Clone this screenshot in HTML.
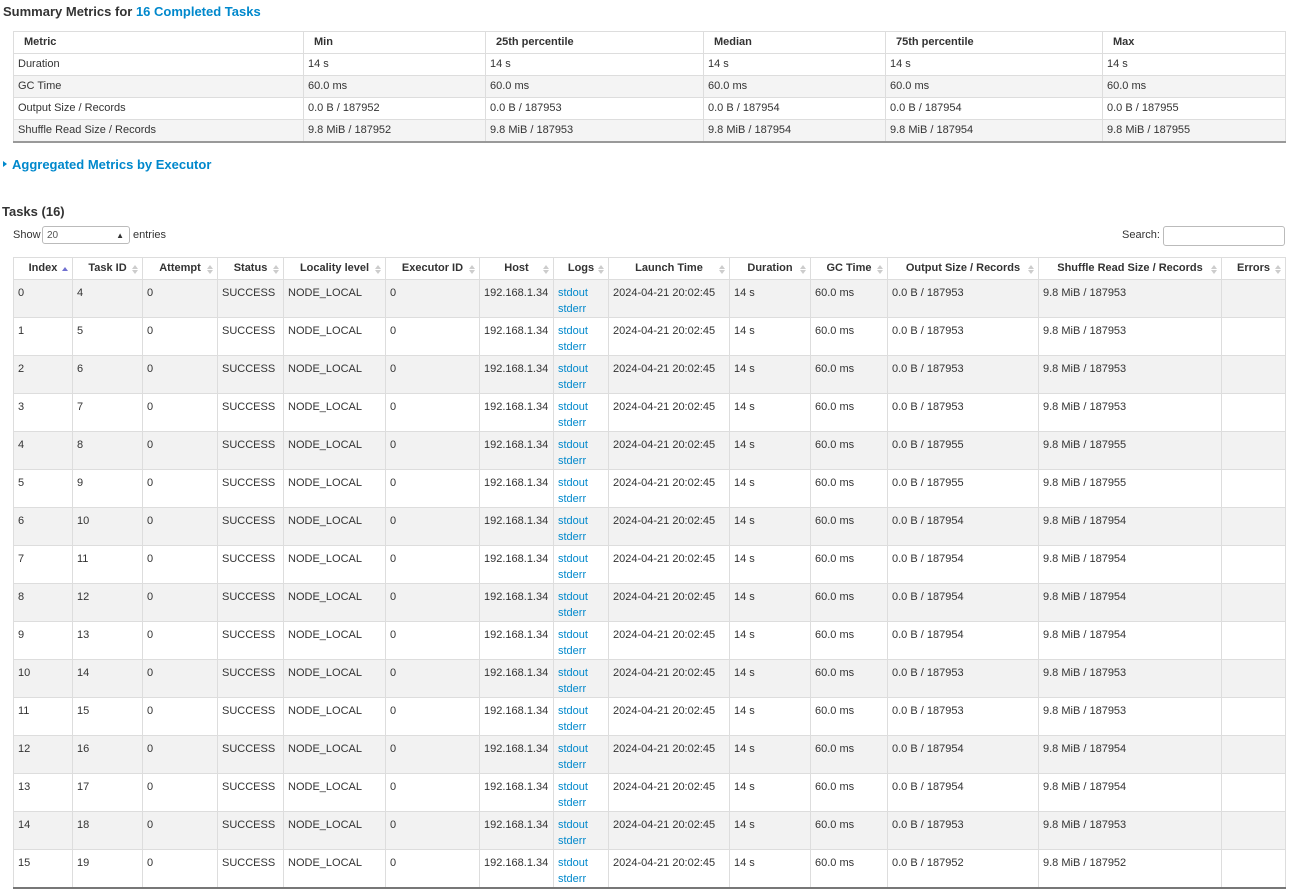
<!DOCTYPE html>
<html><head><meta charset="utf-8"><style>
body{margin:0;background:#fff;font-family:"Liberation Sans",sans-serif;font-size:11px;color:#333;width:1290px;height:894px;overflow:hidden;position:relative}
.a{position:absolute}
h4{margin:0;font-size:13px;font-weight:bold;color:#333}
.blue{color:#0088cc}
table{border-collapse:collapse;table-layout:fixed;position:absolute}
td,th{border:1px solid #ddd;padding:0 4px;text-align:left;vertical-align:top;white-space:nowrap;overflow:hidden}
th{font-weight:bold;color:#333}
#s{left:13px;top:31px;width:1272px}
#s th{height:21px;line-height:21px;padding-left:10px}
#s td{height:21px;line-height:21px}
#s tr:nth-child(odd) td{background:#f4f4f4}
#s tr:last-child td{border-bottom:2px solid #999}
#t{left:13px;top:257px;width:1272px}
#t th{height:21px;line-height:21px;text-align:center;position:relative}
#t th:after{content:"";position:absolute;right:4px;top:7px;border-left:3px solid transparent;border-right:3px solid transparent;border-bottom:4px solid #ccc}
#t th:before{content:"";position:absolute;right:4px;top:12px;border-left:3px solid transparent;border-right:3px solid transparent;border-top:4px solid #ccc}
#t th.sa:before{display:none}
#t th.sa:after{border-bottom-color:#7070d0;top:9px}
#t td{height:37px;padding-top:5px;box-sizing:border-box;line-height:16px}
#t tbody tr:nth-child(odd) td{background:#f2f2f2}
#t tbody tr:last-child td{border-bottom:2px solid #777}
a{color:#0088cc;text-decoration:none}
</style></head><body>
<h4 class="a" style="left:3px;top:4px">Summary Metrics for <span class="blue">16 Completed Tasks</span></h4>
<table id="s"><colgroup><col style="width:290px"><col style="width:182px"><col style="width:218px"><col style="width:182px"><col style="width:217px"><col style="width:183px"></colgroup>
<tr><th>Metric</th><th>Min</th><th>25th percentile</th><th>Median</th><th>75th percentile</th><th>Max</th></tr>
<tr><td>Duration</td><td>14 s</td><td>14 s</td><td>14 s</td><td>14 s</td><td>14 s</td></tr>
<tr><td>GC Time</td><td>60.0 ms</td><td>60.0 ms</td><td>60.0 ms</td><td>60.0 ms</td><td>60.0 ms</td></tr>
<tr><td>Output Size / Records</td><td>0.0 B / 187952</td><td>0.0 B / 187953</td><td>0.0 B / 187954</td><td>0.0 B / 187954</td><td>0.0 B / 187955</td></tr>
<tr><td>Shuffle Read Size / Records</td><td>9.8 MiB / 187952</td><td>9.8 MiB / 187953</td><td>9.8 MiB / 187954</td><td>9.8 MiB / 187954</td><td>9.8 MiB / 187955</td></tr>
</table>
<div class="a" style="left:3px;top:159px;width:0;height:0;border-top:3px solid transparent;border-bottom:3px solid transparent;border-left:4px solid #0088cc;margin-top:2px"></div>
<h4 class="a blue" style="left:12px;top:157px;color:#0088cc">Aggregated Metrics by Executor</h4>
<h4 class="a" style="left:2px;top:204px">Tasks (16)</h4>
<div class="a" style="left:13px;top:229px">Show</div>
<div class="a" style="left:42px;top:226px;width:86px;height:18px;border:1px solid #bbb;border-radius:3px;font-size:10px;line-height:18px;padding-left:4px;box-sizing:border-box;width:88px;color:#555">20<span style="position:absolute;right:5px;top:0;font-size:8px;color:#333">&#9650;</span></div>
<div class="a" style="left:133px;top:229px">entries</div>
<div class="a" style="left:1122px;top:229px">Search:</div>
<div class="a" style="left:1163px;top:226px;width:122px;height:20px;border:1px solid #bbb;border-radius:3px;box-sizing:border-box"></div>
<table id="t"><colgroup><col style="width:59px"><col style="width:70px"><col style="width:75px"><col style="width:66px"><col style="width:102px"><col style="width:94px"><col style="width:74px"><col style="width:55px"><col style="width:121px"><col style="width:81px"><col style="width:77px"><col style="width:151px"><col style="width:183px"><col style="width:64px"></colgroup>
<thead><tr><th class="sa">Index</th><th>Task ID</th><th>Attempt</th><th>Status</th><th>Locality level</th><th>Executor ID</th><th>Host</th><th>Logs</th><th>Launch Time</th><th>Duration</th><th>GC Time</th><th>Output Size / Records</th><th>Shuffle Read Size / Records</th><th>Errors</th></tr></thead>
<tbody>
<tr><td>0</td><td>4</td><td>0</td><td>SUCCESS</td><td>NODE_LOCAL</td><td>0</td><td>192.168.1.34</td><td><a>stdout</a><br><a>stderr</a></td><td>2024-04-21 20:02:45</td><td>14 s</td><td>60.0 ms</td><td>0.0 B / 187953</td><td>9.8 MiB / 187953</td><td></td></tr>
<tr><td>1</td><td>5</td><td>0</td><td>SUCCESS</td><td>NODE_LOCAL</td><td>0</td><td>192.168.1.34</td><td><a>stdout</a><br><a>stderr</a></td><td>2024-04-21 20:02:45</td><td>14 s</td><td>60.0 ms</td><td>0.0 B / 187953</td><td>9.8 MiB / 187953</td><td></td></tr>
<tr><td>2</td><td>6</td><td>0</td><td>SUCCESS</td><td>NODE_LOCAL</td><td>0</td><td>192.168.1.34</td><td><a>stdout</a><br><a>stderr</a></td><td>2024-04-21 20:02:45</td><td>14 s</td><td>60.0 ms</td><td>0.0 B / 187953</td><td>9.8 MiB / 187953</td><td></td></tr>
<tr><td>3</td><td>7</td><td>0</td><td>SUCCESS</td><td>NODE_LOCAL</td><td>0</td><td>192.168.1.34</td><td><a>stdout</a><br><a>stderr</a></td><td>2024-04-21 20:02:45</td><td>14 s</td><td>60.0 ms</td><td>0.0 B / 187953</td><td>9.8 MiB / 187953</td><td></td></tr>
<tr><td>4</td><td>8</td><td>0</td><td>SUCCESS</td><td>NODE_LOCAL</td><td>0</td><td>192.168.1.34</td><td><a>stdout</a><br><a>stderr</a></td><td>2024-04-21 20:02:45</td><td>14 s</td><td>60.0 ms</td><td>0.0 B / 187955</td><td>9.8 MiB / 187955</td><td></td></tr>
<tr><td>5</td><td>9</td><td>0</td><td>SUCCESS</td><td>NODE_LOCAL</td><td>0</td><td>192.168.1.34</td><td><a>stdout</a><br><a>stderr</a></td><td>2024-04-21 20:02:45</td><td>14 s</td><td>60.0 ms</td><td>0.0 B / 187955</td><td>9.8 MiB / 187955</td><td></td></tr>
<tr><td>6</td><td>10</td><td>0</td><td>SUCCESS</td><td>NODE_LOCAL</td><td>0</td><td>192.168.1.34</td><td><a>stdout</a><br><a>stderr</a></td><td>2024-04-21 20:02:45</td><td>14 s</td><td>60.0 ms</td><td>0.0 B / 187954</td><td>9.8 MiB / 187954</td><td></td></tr>
<tr><td>7</td><td>11</td><td>0</td><td>SUCCESS</td><td>NODE_LOCAL</td><td>0</td><td>192.168.1.34</td><td><a>stdout</a><br><a>stderr</a></td><td>2024-04-21 20:02:45</td><td>14 s</td><td>60.0 ms</td><td>0.0 B / 187954</td><td>9.8 MiB / 187954</td><td></td></tr>
<tr><td>8</td><td>12</td><td>0</td><td>SUCCESS</td><td>NODE_LOCAL</td><td>0</td><td>192.168.1.34</td><td><a>stdout</a><br><a>stderr</a></td><td>2024-04-21 20:02:45</td><td>14 s</td><td>60.0 ms</td><td>0.0 B / 187954</td><td>9.8 MiB / 187954</td><td></td></tr>
<tr><td>9</td><td>13</td><td>0</td><td>SUCCESS</td><td>NODE_LOCAL</td><td>0</td><td>192.168.1.34</td><td><a>stdout</a><br><a>stderr</a></td><td>2024-04-21 20:02:45</td><td>14 s</td><td>60.0 ms</td><td>0.0 B / 187954</td><td>9.8 MiB / 187954</td><td></td></tr>
<tr><td>10</td><td>14</td><td>0</td><td>SUCCESS</td><td>NODE_LOCAL</td><td>0</td><td>192.168.1.34</td><td><a>stdout</a><br><a>stderr</a></td><td>2024-04-21 20:02:45</td><td>14 s</td><td>60.0 ms</td><td>0.0 B / 187953</td><td>9.8 MiB / 187953</td><td></td></tr>
<tr><td>11</td><td>15</td><td>0</td><td>SUCCESS</td><td>NODE_LOCAL</td><td>0</td><td>192.168.1.34</td><td><a>stdout</a><br><a>stderr</a></td><td>2024-04-21 20:02:45</td><td>14 s</td><td>60.0 ms</td><td>0.0 B / 187953</td><td>9.8 MiB / 187953</td><td></td></tr>
<tr><td>12</td><td>16</td><td>0</td><td>SUCCESS</td><td>NODE_LOCAL</td><td>0</td><td>192.168.1.34</td><td><a>stdout</a><br><a>stderr</a></td><td>2024-04-21 20:02:45</td><td>14 s</td><td>60.0 ms</td><td>0.0 B / 187954</td><td>9.8 MiB / 187954</td><td></td></tr>
<tr><td>13</td><td>17</td><td>0</td><td>SUCCESS</td><td>NODE_LOCAL</td><td>0</td><td>192.168.1.34</td><td><a>stdout</a><br><a>stderr</a></td><td>2024-04-21 20:02:45</td><td>14 s</td><td>60.0 ms</td><td>0.0 B / 187954</td><td>9.8 MiB / 187954</td><td></td></tr>
<tr><td>14</td><td>18</td><td>0</td><td>SUCCESS</td><td>NODE_LOCAL</td><td>0</td><td>192.168.1.34</td><td><a>stdout</a><br><a>stderr</a></td><td>2024-04-21 20:02:45</td><td>14 s</td><td>60.0 ms</td><td>0.0 B / 187953</td><td>9.8 MiB / 187953</td><td></td></tr>
<tr><td>15</td><td>19</td><td>0</td><td>SUCCESS</td><td>NODE_LOCAL</td><td>0</td><td>192.168.1.34</td><td><a>stdout</a><br><a>stderr</a></td><td>2024-04-21 20:02:45</td><td>14 s</td><td>60.0 ms</td><td>0.0 B / 187952</td><td>9.8 MiB / 187952</td><td></td></tr>
</tbody></table>
</body></html>
